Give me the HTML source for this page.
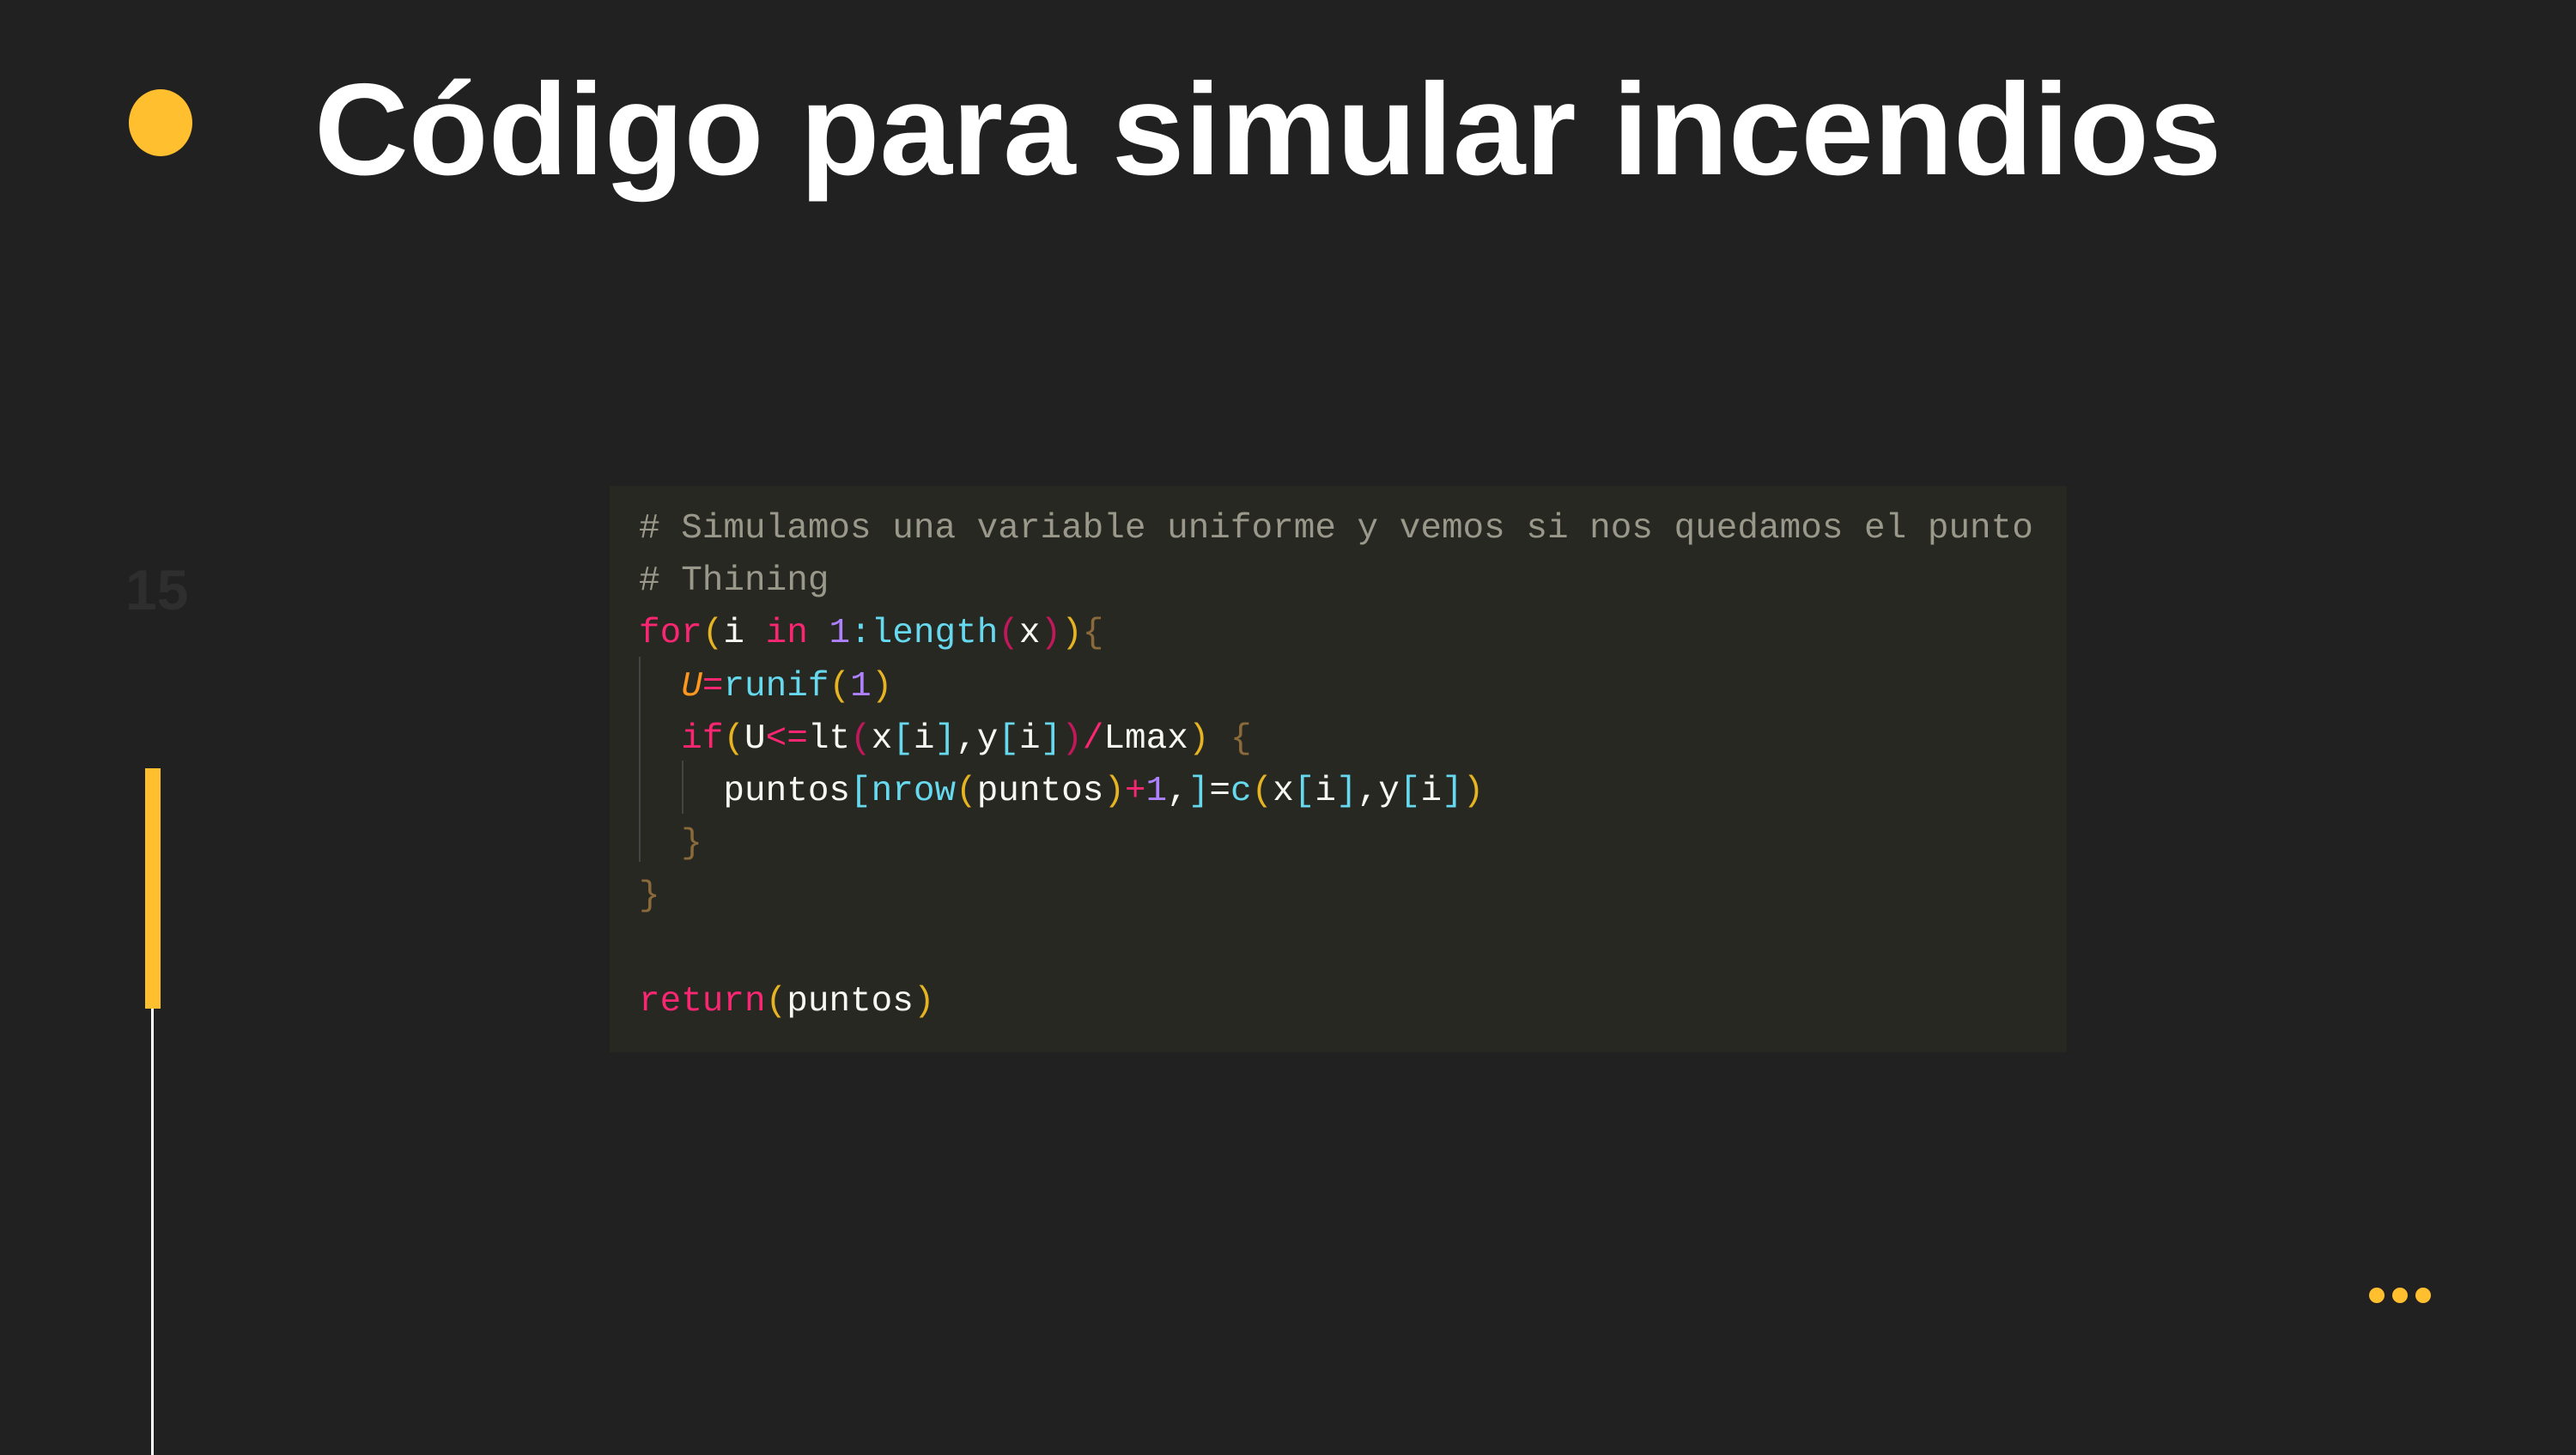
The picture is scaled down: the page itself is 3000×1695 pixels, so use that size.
<!DOCTYPE html>
<html><head><meta charset="utf-8"><style>
html,body{margin:0;padding:0}
body{width:3000px;height:1688px;background:#212121;position:relative;overflow:hidden;font-family:"Liberation Sans",sans-serif}
.dot{position:absolute;left:150px;top:104px;width:74px;height:78px;border-radius:50%;background:#FFBF2F}
h1{position:absolute;left:366px;top:66px;margin:0;font-size:152px;font-weight:bold;color:#fff;line-height:170px;white-space:nowrap}
.num{position:absolute;left:146px;top:652px;font-size:66px;color:#2e2e2e;font-weight:bold;line-height:70px}
.bar{position:absolute;left:169px;top:895px;width:18px;height:280px;background:#FFBF2F}
.line{position:absolute;left:176px;top:1175px;width:3px;height:520px;background:#fff}
.dots{position:absolute;top:1500px;left:2759px}
.dots span{position:absolute;width:18px;height:18px;border-radius:50%;background:#FFBF2F;top:0}
.code{position:absolute;left:710px;top:566px;width:1697px;height:660px;background:#272822}
pre{position:absolute;left:34px;top:20px;margin:0;font-family:"Liberation Mono",monospace;font-size:41px;line-height:61.2px;color:#f8f8f2}
.c{color:#9a988a}.k{color:#f92672}.n{color:#ae81ff}.f{color:#66d9ef}.y{color:#e6b422}.m{color:#c2185b}.o{color:#fd971f;font-style:italic}.b{color:#8a6a3a}
.g{position:absolute;width:2px;background:#444}
</style></head><body>
<div class="dot"></div>
<h1>Código para simular incendios</h1>
<div class="num">15</div>
<div class="bar"></div><div class="line"></div>
<div class="dots"><span style="left:0"></span><span style="left:27px"></span><span style="left:54px"></span></div>
<div class="code">
<div class="g" style="left:34px;top:199px;height:239px"></div>
<div class="g" style="left:84px;top:320px;height:62px"></div>
<pre><span class="c"># Simulamos una variable uniforme y vemos si nos quedamos el punto</span>
<span class="c"># Thining</span>
<span class="k">for</span><span class="y">(</span>i <span class="k">in</span> <span class="n">1</span><span class="f">:length</span><span class="m">(</span>x<span class="m">)</span><span class="y">)</span><span class="b">{</span>
  <span class="o">U</span><span class="k">=</span><span class="f">runif</span><span class="y">(</span><span class="n">1</span><span class="y">)</span>
  <span class="k">if</span><span class="y">(</span>U<span class="k">&lt;=</span>lt<span class="m">(</span>x<span class="f">[</span>i<span class="f">]</span>,y<span class="f">[</span>i<span class="f">]</span><span class="m">)</span><span class="k">/</span>Lmax<span class="y">)</span> <span class="b">{</span>
    puntos<span class="f">[nrow</span><span class="y">(</span>puntos<span class="y">)</span><span class="k">+</span><span class="n">1</span>,<span class="f">]</span>=<span class="f">c</span><span class="y">(</span>x<span class="f">[</span>i<span class="f">]</span>,y<span class="f">[</span>i<span class="f">]</span><span class="y">)</span>
  <span class="b">}</span>
<span class="b">}</span>

<span class="k">return</span><span class="y">(</span>puntos<span class="y">)</span></pre>
</div>
</body></html>
